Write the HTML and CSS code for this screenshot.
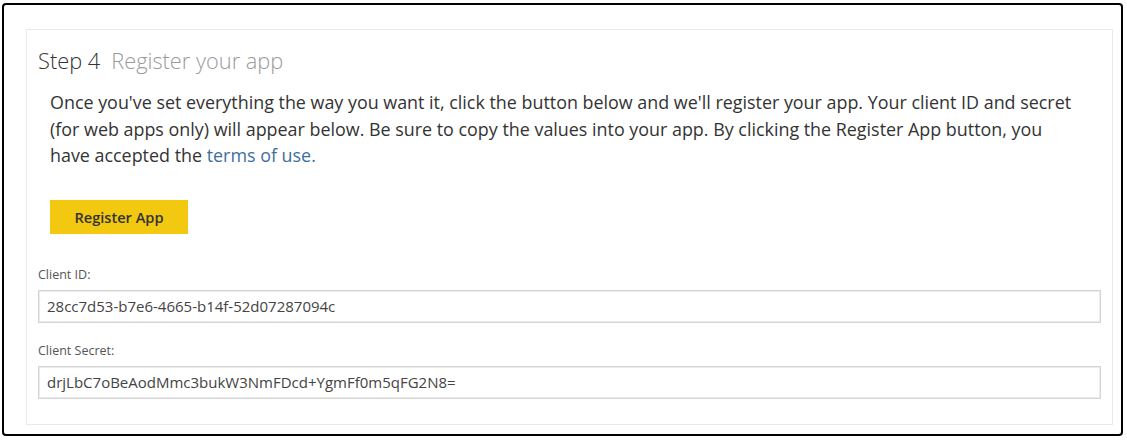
FILE: index.html
```html
<!DOCTYPE html>
<html lang="en">
<head>
<meta charset="utf-8">
<title>Step 4 Register your app</title>
<link rel="stylesheet" href="styles.css">
</head>
<body>
<div class="frame">
  <section class="panel">
    <h2 class="step-title"><span class="step-num">Step 4</span><span class="step-name">Register your app</span></h2>
    <p class="intro">Once you've set everything the way you want it, click the button below and we'll register your app. Your client ID and secret (for web apps only) will appear below. Be sure to copy the values into your app. By clicking the Register App button, you have accepted the <a class="link" href="#">terms of use.</a></p>
    <button class="register-btn" type="button">Register App</button>
    <label class="field-label">Client ID:</label>
    <div class="field">28cc7d53-b7e6-4665-b14f-52d07287094c</div>
    <label class="field-label second">Client Secret:</label>
    <div class="field">drjLbC7oBeAodMmc3bukW3NmFDcd+YgmFf0m5qFG2N8=</div>
  </section>
</div>
</body>
</html>
```

FILE: styles.css
```css
html, body {
  margin: 0;
  padding: 0;
  background: #ffffff;
}

body {
  font-family: "Open Sans", "Noto Sans", "Liberation Sans", sans-serif;
  color: #333333;
}

.frame {
  box-sizing: border-box;
  margin: 3px 0 0 2px;
  width: 1121px;
  height: 433px;
  border: 2px solid #000000;
  border-radius: 4px;
  padding: 24px 8px 9px 22px;
}

.panel {
  box-sizing: border-box;
  height: 100%;
  border: 1px solid #e9e9e9;
  padding: 16px 11px 0 11px;
  display: flex;
  flex-direction: column;
  align-items: flex-start;
}

.step-title {
  margin: 0;
  font-weight: 300;
  font-size: 21.8px;
  line-height: 30px;
}

.step-num {
  color: #333333;
  margin-right: 11px;
}

.step-name {
  color: #9a9a9a;
}

.intro {
  margin: 13px 0 0 12px;
  font-size: 17.9px;
  line-height: 26.5px;
  color: #333333;
  max-width: 1028px;
}

.link {
  color: #3e6f9c;
  text-decoration: none;
}

.register-btn {
  margin: 31px 0 0 12px;
  width: 138px;
  height: 34px;
  border: none;
  background: #f2c811;
  font-family: inherit;
  font-weight: 600;
  font-size: 14.6px;
  color: #333333;
  padding: 0;
}

.field-label {
  margin-top: 32px;
  font-size: 12.5px;
  line-height: 18px;
  color: #555555;
}

.field-label.second {
  margin-top: 19px;
}

.field {
  box-sizing: border-box;
  align-self: stretch;
  margin-top: 6px;
  height: 33px;
  border: 1px solid #d4d4d4;
  box-shadow: inset 0 0 0 1px #ececec;
  padding: 0 8px;
  font-size: 15px;
  line-height: 31px;
  color: #444444;
}
```
